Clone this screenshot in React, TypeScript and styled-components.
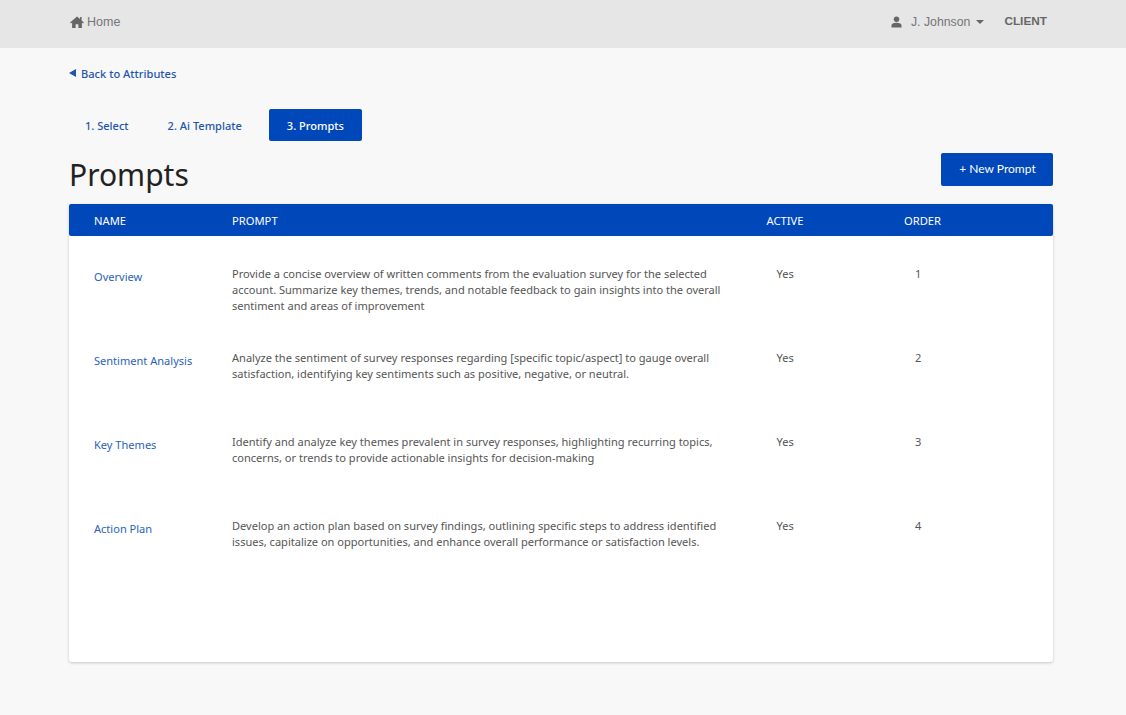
import React from 'react';
import styled, { createGlobalStyle } from 'styled-components';

const GlobalStyle = createGlobalStyle`
  html, body {
    margin: 0;
    padding: 0;
    background-color: #f8f8f8;
    font-family: "Noto Sans", "Open Sans", sans-serif;
  }
`;

const Page = styled.div`
  width: 1126px;
  height: 715px;
  overflow: hidden;
  box-sizing: border-box;
`;

const TopBar = styled.header`
  height: 48px;
  box-sizing: border-box;
  padding: 0 79px 5px 70px;
  display: flex;
  align-items: center;
  justify-content: space-between;
  background-color: #e6e6e6;
  font-family: "Liberation Sans", Arial, sans-serif;
  font-size: 12.5px;
  color: #757575;
`;

const HomeLink = styled.a`
  display: flex;
  align-items: center;
  gap: 3px;
`;

const UserArea = styled.div`
  display: flex;
  align-items: center;
`;

const UserName = styled.span`
  margin-left: 9px;
  font-size: 12.3px;
`;

const Caret = styled.span`
  width: 0;
  height: 0;
  margin: 0 20px 0 6px;
  border-left: 4px solid transparent;
  border-right: 4px solid transparent;
  border-top: 4px solid #666666;
`;

const ClientLabel = styled.span`
  margin-bottom: 2px;
  font-size: 11.8px;
  font-weight: 700;
  color: #666666;
`;

const Main = styled.main`
  width: 984px;
  margin-left: 69px;
`;

const BackLink = styled.a`
  display: flex;
  align-items: center;
  gap: 5px;
  height: 18px;
  margin-top: 16px;
  font-size: 11.1px;
  font-weight: 500;
  color: #1f55ad;
`;

const BackArrow = styled.span`
  width: 0;
  height: 0;
  border-top: 4px solid transparent;
  border-bottom: 4px solid transparent;
  border-right: 7px solid #1f55ad;
`;

const Tabs = styled.nav`
  display: flex;
  gap: 7px;
  margin-top: 27px;
`;

const Tab = styled.a<{ $active?: boolean }>`
  height: 32px;
  box-sizing: border-box;
  padding: 0 ${(p) => (p.$active ? '18px' : '16px')};
  margin-left: ${(p) => (p.$active ? '4px' : '0')};
  display: flex;
  align-items: center;
  border-radius: 2px;
  font-size: 11.05px;
  font-weight: 500;
  color: ${(p) => (p.$active ? '#ffffff' : '#1f55ad')};
  background-color: ${(p) => (p.$active ? '#0047ba' : 'transparent')};
`;

const TitleRow = styled.div`
  display: flex;
  align-items: flex-start;
  justify-content: space-between;
  height: 63px;
`;

const Title = styled.h1`
  margin: 9px 0 0;
  font-size: 30px;
  line-height: 50px;
  font-weight: 400;
  color: #222222;
`;

const NewButton = styled.button`
  width: 112px;
  height: 33px;
  margin-top: 12px;
  border: 0;
  border-radius: 2px;
  padding: 0 0 2px 1px;
  font-family: "Lato", sans-serif;
  font-size: 12px;
  color: #ffffff;
  background-color: #0047ba;
`;

const Card = styled.section`
  height: 458px;
  border-radius: 3px;
  background-color: #ffffff;
  box-shadow: 0 1px 3px rgba(0, 0, 0, 0.2);
`;

const columns = '138px 534.5px 137.5px 1fr';

const HeadRow = styled.div`
  display: grid;
  grid-template-columns: ${columns};
  align-items: center;
  height: 32px;
  padding-left: 25px;
  border-radius: 2px;
  background-color: #0047ba;
  font-size: 11.2px;
  color: #ffffff;
`;

const Rows = styled.div`
  padding: 30px 0 0 25px;
`;

const Row = styled.div`
  display: grid;
  grid-template-columns: ${columns};
  height: 84.1px;
  font-size: 11.05px;
  line-height: 16px;
  color: #555555;
`;

const NameLink = styled.a`
  margin-top: 3px;
  color: #2a62b8;
`;

const PromptText = styled.p`
  width: 500px;
  margin: 0;
`;

const ActiveCell = styled.span`
  padding-left: 10px;
`;

const OrderCell = styled.span`
  padding-left: 11px;
`;

const prompts = [
  {
    name: 'Overview',
    text: 'Provide a concise overview of written comments from the evaluation survey for the selected account. Summarize key themes, trends, and notable feedback to gain insights into the overall sentiment and areas of improvement',
  },
  {
    name: 'Sentiment Analysis',
    text: 'Analyze the sentiment of survey responses regarding [specific topic/aspect] to gauge overall satisfaction, identifying key sentiments such as positive, negative, or neutral.',
  },
  {
    name: 'Key Themes',
    text: 'Identify and analyze key themes prevalent in survey responses, highlighting recurring topics, concerns, or trends to provide actionable insights for decision-making',
  },
  {
    name: 'Action Plan',
    text: 'Develop an action plan based on survey findings, outlining specific steps to address identified issues, capitalize on opportunities, and enhance overall performance or satisfaction levels.',
  },
];

export default function App() {
  return (
    <Page>
      <GlobalStyle />
      <TopBar>
        <HomeLink>
          <svg width="14" height="12" viewBox="0 0 15 13" fill="#666666">
            <path d="M7.5 0.5 L0 7 L1 8 L2.2 7 V13 H6 V9 H9 V13 H12.8 V7 L14 8 L15 7 L12.5 4.8 V1.2 H10.8 V3.3 Z" />
          </svg>
          Home
        </HomeLink>
        <UserArea>
          <svg width="11" height="12" viewBox="0 0 12 12" fill="#666666">
            <circle cx="6" cy="3" r="3" />
            <path d="M0.5 12 V10 C0.5 7.8 2.5 6.8 6 6.8 C9.5 6.8 11.5 7.8 11.5 10 V12 Z" />
          </svg>
          <UserName>J. Johnson</UserName>
          <Caret />
          <ClientLabel>CLIENT</ClientLabel>
        </UserArea>
      </TopBar>
      <Main>
        <BackLink>
          <BackArrow />
          Back to Attributes
        </BackLink>
        <Tabs>
          <Tab>1. Select</Tab>
          <Tab>2. Ai Template</Tab>
          <Tab $active>3. Prompts</Tab>
        </Tabs>
        <TitleRow>
          <Title>Prompts</Title>
          <NewButton>+ New Prompt</NewButton>
        </TitleRow>
        <Card>
          <HeadRow>
            <span>NAME</span>
            <span>PROMPT</span>
            <span>ACTIVE</span>
            <span>ORDER</span>
          </HeadRow>
          <Rows>
            {prompts.map((prompt, i) => (
              <Row key={prompt.name}>
                <NameLink>{prompt.name}</NameLink>
                <PromptText>{prompt.text}</PromptText>
                <ActiveCell>Yes</ActiveCell>
                <OrderCell>{i + 1}</OrderCell>
              </Row>
            ))}
          </Rows>
        </Card>
      </Main>
    </Page>
  );
}
